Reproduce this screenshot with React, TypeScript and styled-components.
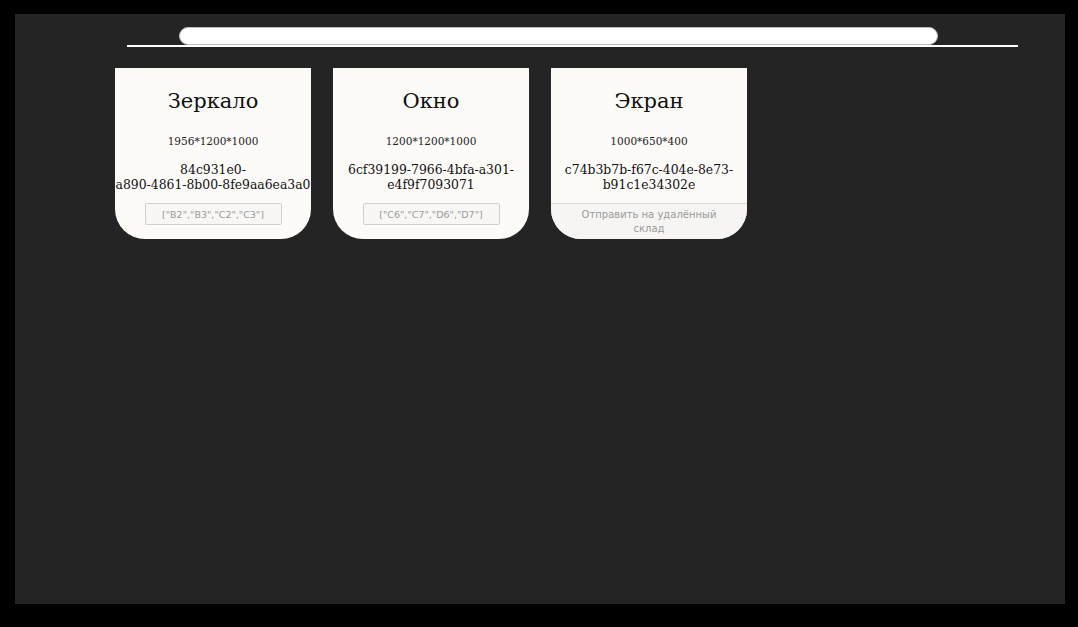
import styled, { createGlobalStyle } from 'styled-components';

const GlobalStyle = createGlobalStyle`
  body {
    margin: 0;
    background: #000;
    font-family: "DejaVu Serif", serif;
  }
`;

const Panel = styled.main`
  box-sizing: border-box;
  margin: 14px 0 0 15px;
  width: 1050px;
  height: 590px;
  background: #242424;
  box-shadow: 0 0 14px 3px #000;
  padding-top: 13px;
`;

const SearchBar = styled.div`
  margin-left: 112px;
  width: 891px;
  padding-left: 52px;
  box-sizing: border-box;
  border-bottom: 2px solid #fff;
`;

const SearchInput = styled.input`
  display: block;
  box-sizing: border-box;
  width: 759px;
  height: 18px;
  border: 1px solid #bbb;
  border-radius: 9px;
  background: #fff;
  outline: none;
`;

const CardList = styled.div`
  display: flex;
  gap: 22px;
  margin: 21px 0 0 100px;
`;

const Card = styled.section`
  box-sizing: border-box;
  width: 196px;
  height: 171px;
  background: #fdfbf8;
  border-radius: 0 0 30px 30px;
  overflow: hidden;
  display: flex;
  flex-direction: column;
  align-items: center;
  text-align: center;
  color: #111;
`;

const Title = styled.h2`
  margin: 21px 0 0;
  font-size: 21px;
  line-height: 25px;
  font-weight: normal;
`;

const Size = styled.div`
  margin-top: 20px;
  font-size: 10.5px;
  line-height: 14px;
  color: #222;
`;

const Id = styled.div`
  margin-top: 14px;
  font-size: 12.4px;
  line-height: 15px;
  width: 100%;
`;

const IdChunk = styled.span`
  white-space: nowrap;
`;

const CellsButton = styled.button`
  margin-top: 11px;
  width: 137px;
  height: 22px;
  border: 1px solid #d2d0cd;
  border-radius: 2px;
  background: #f8f7f5;
  color: #9a9a9a;
  font-family: "DejaVu Sans", sans-serif;
  font-size: 9.5px;
  padding: 0;
`;

const SendButton = styled.button`
  margin-top: 11px;
  width: 100%;
  flex: 1;
  border: none;
  border-top: 1px solid #d8d6d3;
  background: #f6f5f3;
  color: #9a9a9a;
  font-family: "DejaVu Sans", sans-serif;
  font-size: 10px;
  line-height: 14px;
  padding: 4px 30px 0;
  display: flex;
  align-items: flex-start;
  justify-content: center;
`;

type Item = { name: string; size: string; id: string; cells?: string };

const items: Item[] = [
  { name: 'Зеркало', size: '1956*1200*1000', id: '84c931e0-a890-4861-8b00-8fe9aa6ea3a0', cells: '["B2","B3","C2","C3"]' },
  { name: 'Окно', size: '1200*1200*1000', id: '6cf39199-7966-4bfa-a301-e4f9f7093071', cells: '["C6","C7","D6","D7"]' },
  { name: 'Экран', size: '1000*650*400', id: 'c74b3b7b-f67c-404e-8e73-b91c1e34302e' },
];

// a hyphen followed by a digit is not a break point
const splitId = (id: string) => id.split(/(?<=-)(?=[a-z])/);

export default function App() {
  return (
    <>
      <GlobalStyle />
      <Panel>
        <SearchBar>
          <SearchInput type="text" />
        </SearchBar>
        <CardList>
          {items.map((item) => (
            <Card key={item.id}>
              <Title>{item.name}</Title>
              <Size>{item.size}</Size>
              <Id>
                {splitId(item.id).map((chunk, i) => (
                  <IdChunk key={i}>{chunk}</IdChunk>
                ))}
              </Id>
              {item.cells ? (
                <CellsButton>{item.cells}</CellsButton>
              ) : (
                <SendButton>Отправить на удалённый склад</SendButton>
              )}
            </Card>
          ))}
        </CardList>
      </Panel>
    </>
  );
}
